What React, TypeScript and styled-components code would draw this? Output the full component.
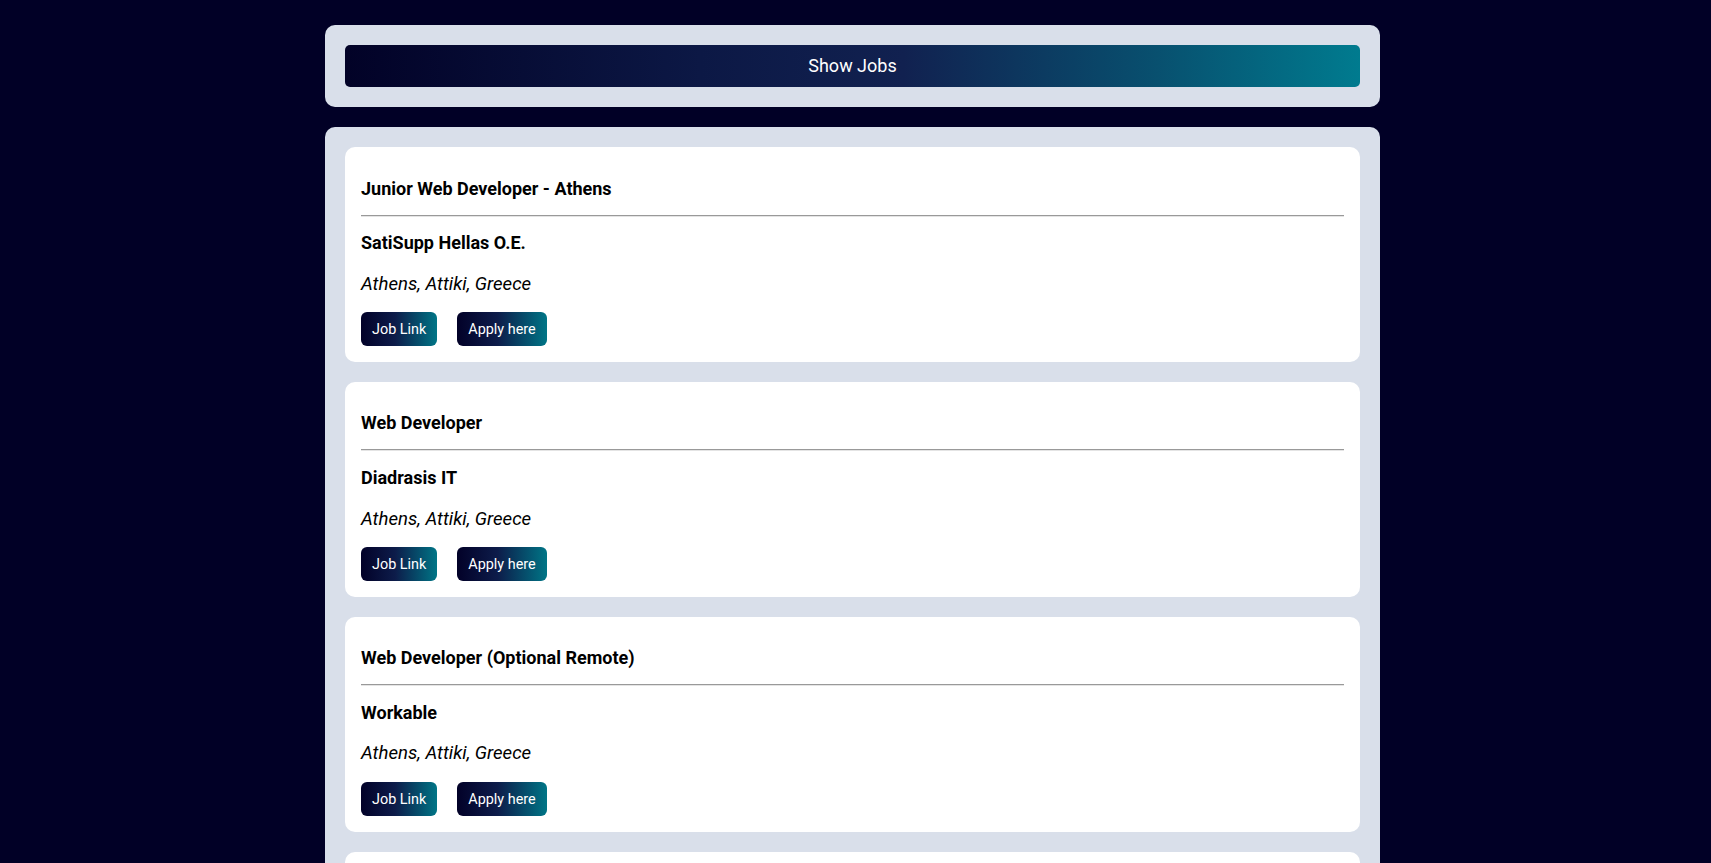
import React from "react";
import styled, { createGlobalStyle } from "styled-components";

const GlobalStyle = createGlobalStyle`
  html, body {
    margin: 0;
    padding: 0;
    background: #010026;
    font-family: Roboto, "Liberation Sans", Arial, sans-serif;
  }
  body::-webkit-scrollbar { display: none; }
  html { scrollbar-width: none; }
`;

const gradient =
  "linear-gradient(90deg, #020227 0%, #0c1845 35%, #112150 55%, #08506f 80%, #007b8f 100%)";

const Page = styled.div`
  display: flex;
  flex-direction: column;
  align-items: center;
  gap: 20px;
  padding: 25px 6px 40px 0;
`;

const Panel = styled.section`
  width: 1055px;
  box-sizing: border-box;
  background: #d9dfea;
  border-radius: 10px;
  padding: 20px;
  display: flex;
  flex-direction: column;
  gap: 20px;
`;

const ShowButton = styled.button`
  width: 100%;
  height: 42px;
  border: none;
  border-radius: 5px;
  background: ${gradient};
  color: #ffffff;
  font-family: Roboto, "Liberation Sans", Arial, sans-serif;
  font-size: 18px;
  padding: 0 0 2px;
  cursor: pointer;
`;

const Card = styled.article`
  background: #ffffff;
  border-radius: 10px;
  padding: 16px;
  display: flex;
  flex-direction: column;
`;

const Title = styled.h3`
  margin: 14.6px 0 16px;
  font-size: 18px;
  font-weight: 700;
  color: #000000;
`;

const Divider = styled.hr`
  margin: 0;
  border: none;
  border-top: 1px solid #999999;
  border-bottom: 1px solid #e4e4e4;
`;

const Company = styled.h4`
  margin: 15.6px 0 0;
  font-size: 18px;
  font-weight: 700;
  color: #000000;
`;

const Location = styled.p`
  margin: 19.5px 0 0;
  font-size: 18.6px;
  font-style: italic;
  color: #000000;
`;

const Actions = styled.div`
  display: flex;
  gap: 20px;
  margin-top: 17.2px;
`;

const ActionButton = styled.a`
  display: inline-flex;
  align-items: center;
  justify-content: center;
  height: 34px;
  padding: 2px 11px 0;
  box-sizing: border-box;
  border-radius: 6px;
  background: linear-gradient(90deg, #020128 0%, #0d1c4a 45%, #007586 100%);
  color: #ffffff;
  font-size: 14.4px;
  text-decoration: none;
  cursor: pointer;
`;

type Job = { title: string; company: string; location: string };

const jobs: Job[] = [
  { title: "Junior Web Developer - Athens", company: "SatiSupp Hellas O.E.", location: "Athens, Attiki, Greece" },
  { title: "Web Developer", company: "Diadrasis IT", location: "Athens, Attiki, Greece" },
  { title: "Web Developer (Optional Remote)", company: "Workable", location: "Athens, Attiki, Greece" },
  { title: "Front End Developer", company: "Netcompany-Intrasoft", location: "Athens, Attiki, Greece" },
];

export default function App() {
  return (
    <>
      <GlobalStyle />
      <Page>
        <Panel>
          <ShowButton>Show Jobs</ShowButton>
        </Panel>
        <Panel>
          {jobs.map((job) => (
            <Card key={job.title}>
              <Title>{job.title}</Title>
              <Divider />
              <Company>{job.company}</Company>
              <Location>{job.location}</Location>
              <Actions>
                <ActionButton>Job Link</ActionButton>
                <ActionButton>Apply here</ActionButton>
              </Actions>
            </Card>
          ))}
        </Panel>
      </Page>
    </>
  );
}
